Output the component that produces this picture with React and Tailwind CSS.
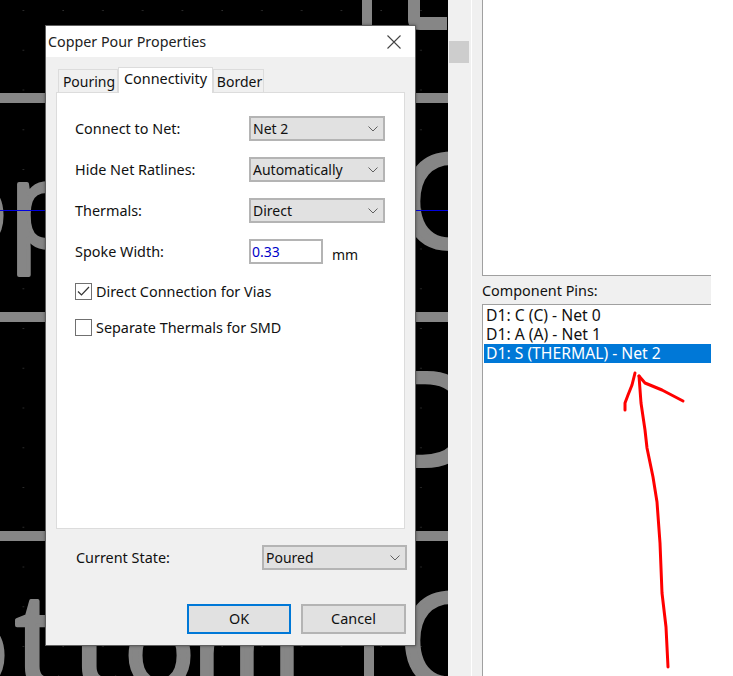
import React from "react";

function Chevron() {
  return (
    <svg width="10" height="6" viewBox="0 0 10 6" fill="none" stroke="#606060" strokeWidth="1">
      <path d="M0.5 0.5 L5 5 L9.5 0.5" />
    </svg>
  );
}

function Combo({ value, className }) {
  return (
    <div className={`flex h-[25px] items-center justify-between border-2 border-[#b4b4b4] bg-[#e1e1e1] pl-[2px] pr-[5px] text-[14px] text-[#111] ${className}`}>
      <span>{value}</span>
      <Chevron />
    </div>
  );
}

function Row({ label, children }) {
  return (
    <div className="flex h-[25px] items-center">
      <span className="w-[174px] text-[14.4px] text-[#111]">{label}</span>
      {children}
    </div>
  );
}

function Checkbox({ checked, label }) {
  return (
    <div className="flex h-[17px] items-center gap-[4px] text-[14.4px] text-[#111]">
      <div className="flex h-[17px] w-[17px] items-center justify-center border border-[#707070] bg-white">
        {checked && (
          <svg width="13" height="11" viewBox="0 0 13 11" fill="none" stroke="#333" strokeWidth="1.2">
            <path d="M1 5.5 L4.5 9 L12 1" />
          </svg>
        )}
      </div>
      <span>{label}</span>
    </div>
  );
}

function PcbCanvas() {
  return (
    <svg className="absolute inset-0" width="448" height="676" viewBox="0 0 448 676">
      <defs>
        <pattern id="grid" x="3.4" y="10" width="39.75" height="39.75" patternUnits="userSpaceOnUse">
          <rect x="19.5" y="0" width="1" height="1" fill="#4a4a4a" />
        </pattern>
      </defs>
      <rect width="448" height="676" fill="#000" />
      <rect width="448" height="676" fill="url(#grid)" />
      <g fill="#868686">
        <rect x="0" y="93" width="448" height="10" />
        <rect x="0" y="312" width="448" height="10" />
        <rect x="0" y="531" width="448" height="10" />
        <rect x="362" y="0" width="10" height="26" />
        <path d="M408 0 H420 V17 H447 V30 H420 Q408 30 408 20 Z" />
      </g>
      <g fontFamily="'Open Sans', sans-serif" fill="#868686" stroke="#868686" strokeWidth="4" strokeLinejoin="round">
        <text x="-63" y="247" fontSize="118">o</text>
        <text x="9" y="247" fontSize="118">p</text>
        <text x="399" y="248" fontSize="130">C</text>
        <text x="386" y="466" fontSize="130">D</text>
        <text x="-62" y="687" fontSize="118">o</text>
        <text x="15" y="687" fontSize="130">t</text>
        <text x="72" y="687" fontSize="130">t</text>
        <text x="124" y="687" fontSize="118">o</text>
        <text x="192" y="687" fontSize="118">m</text>
        <rect x="364" y="640" width="10" height="36" strokeWidth="0" />
        <text x="399" y="687" fontSize="130">C</text>
      </g>
      <rect x="0" y="210" width="448" height="1" fill="#0000e0" />
    </svg>
  );
}

function Dialog() {
  return (
    <div className="absolute left-[45px] top-[25px] flex h-[621px] w-[371px] flex-col border border-[#606060] bg-[#f0f0f0] shadow-[0_0_3px_rgba(0,0,0,0.4)]">
      <div className="flex h-[31px] shrink-0 items-center justify-between bg-white pl-[2px] pr-[14px]">
        <span className="text-[14.3px] text-[#222]">Copper Pour Properties</span>
        <svg width="14" height="14" viewBox="0 0 14 14" stroke="#444" strokeWidth="1.1">
          <path d="M0.5 0.5 L13.5 13.5 M13.5 0.5 L0.5 13.5" />
        </svg>
      </div>

      <div className="flex h-[35px] shrink-0 items-end pl-[12px] text-[14px] text-[#111]">
        <div className="flex h-[23px] w-[60px] items-center justify-center border border-b-0 border-[#dcdcdc] bg-[#f0f0f0] pl-[2px]">Pouring</div>
        <div className="z-10 -mb-px flex h-[26px] w-[95px] items-center justify-center border border-b-0 border-[#dcdcdc] bg-white pb-[3px] text-[14.4px]">Connectivity</div>
        <div className="flex h-[23px] w-[51px] items-center justify-center border border-b-0 border-[#dcdcdc] bg-[#f0f0f0] pl-[2px]">Border</div>
      </div>

      <div className="ml-[10px] flex h-[437px] w-[349px] shrink-0 flex-col border border-[#dcdcdc] bg-white pl-[18px] pt-[23px]">
        <div className="flex flex-col gap-[16px]">
          <Row label="Connect to Net:"><Combo value="Net 2" className="w-[136px]" /></Row>
          <Row label="Hide Net Ratlines:"><Combo value="Automatically" className="w-[136px]" /></Row>
          <Row label="Thermals:"><Combo value="Direct" className="w-[136px]" /></Row>
          <Row label="Spoke Width:">
            <div className="flex h-[25px] w-[74px] items-center border-2 border-[#b4b4b4] bg-white pl-[1px] text-[14px] text-[#0000c8]">0.33</div>
            <span className="ml-[9px] mt-[5px] text-[14px] text-[#111]">mm</span>
          </Row>
        </div>
        <div className="mt-[19px] flex flex-col gap-[19px]">
          <Checkbox checked label="Direct Connection for Vias" />
          <Checkbox label="Separate Thermals for SMD" />
        </div>
      </div>

      <div className="ml-[30px] mt-[16px] flex h-[25px] shrink-0 items-center">
        <span className="w-[186px] text-[14.4px] text-[#111]">Current State:</span>
        <Combo value="Poured" className="w-[145px]" />
      </div>

      <div className="ml-[141px] mt-[34px] flex gap-[10px] text-[14.4px] text-[#111]">
        <button className="h-[30px] w-[104px] border-2 border-[#0078d7] bg-[#e1e1e1]">OK</button>
        <button className="h-[30px] w-[105px] border-2 border-[#b4b4b4] bg-[#e1e1e1]">Cancel</button>
      </div>
    </div>
  );
}

function RightPanel() {
  return (
    <div className="flex h-full w-[239px] flex-col bg-[#f0f0f0] pl-[10px]">
      <div className="h-[276px] shrink-0 border-b border-l border-[#a0a0a0] bg-white" />
      <div className="flex h-[28px] shrink-0 items-center pt-[2px] text-[14.4px] text-[#111]">Component Pins:</div>
      <div className="flex-1 border-l border-t border-[#a0a0a0] bg-white pl-px pt-[1px] text-[15.7px] leading-[19px] text-[#111]">
        <div className="h-[19px] pl-[2px]">D1: C (C) - Net 0</div>
        <div className="h-[19px] pl-[2px]">D1: A (A) - Net 1</div>
        <div className="h-[19px] bg-[#0078d7] pl-[2px] text-white">D1: S (THERMAL) - Net 2</div>
      </div>
    </div>
  );
}

export default function App() {
  return (
    <div className="relative flex h-[676px] w-[733px] overflow-hidden bg-white font-['Noto_Sans',sans-serif]">
      <div className="relative h-full w-[448px] shrink-0">
        <PcbCanvas />
        <Dialog />
      </div>
      <div className="h-full w-[23px] shrink-0 bg-[#f0f0f0] pl-px pt-[41px]">
        <div className="h-[22px] w-[20px] bg-[#cdcdcd]" />
      </div>
      <div className="h-full w-px shrink-0 bg-white" />
      <RightPanel />

      <svg className="pointer-events-none absolute inset-0" width="733" height="676" viewBox="0 0 733 676" fill="none" stroke="#ff0000" strokeWidth="3" strokeLinecap="round" strokeLinejoin="round">
        <path d="M639 376 L641 403 L645 430 L647 448 L653 477 L657 502 L660 543 L662 593 L666 627 L668 667" />
        <path d="M639 376 L645 383 L662 390 L683 401" />
        <path d="M635 373 L632 385 L628 395 L625 403 L625 410" />
      </svg>
    </div>
  );
}
